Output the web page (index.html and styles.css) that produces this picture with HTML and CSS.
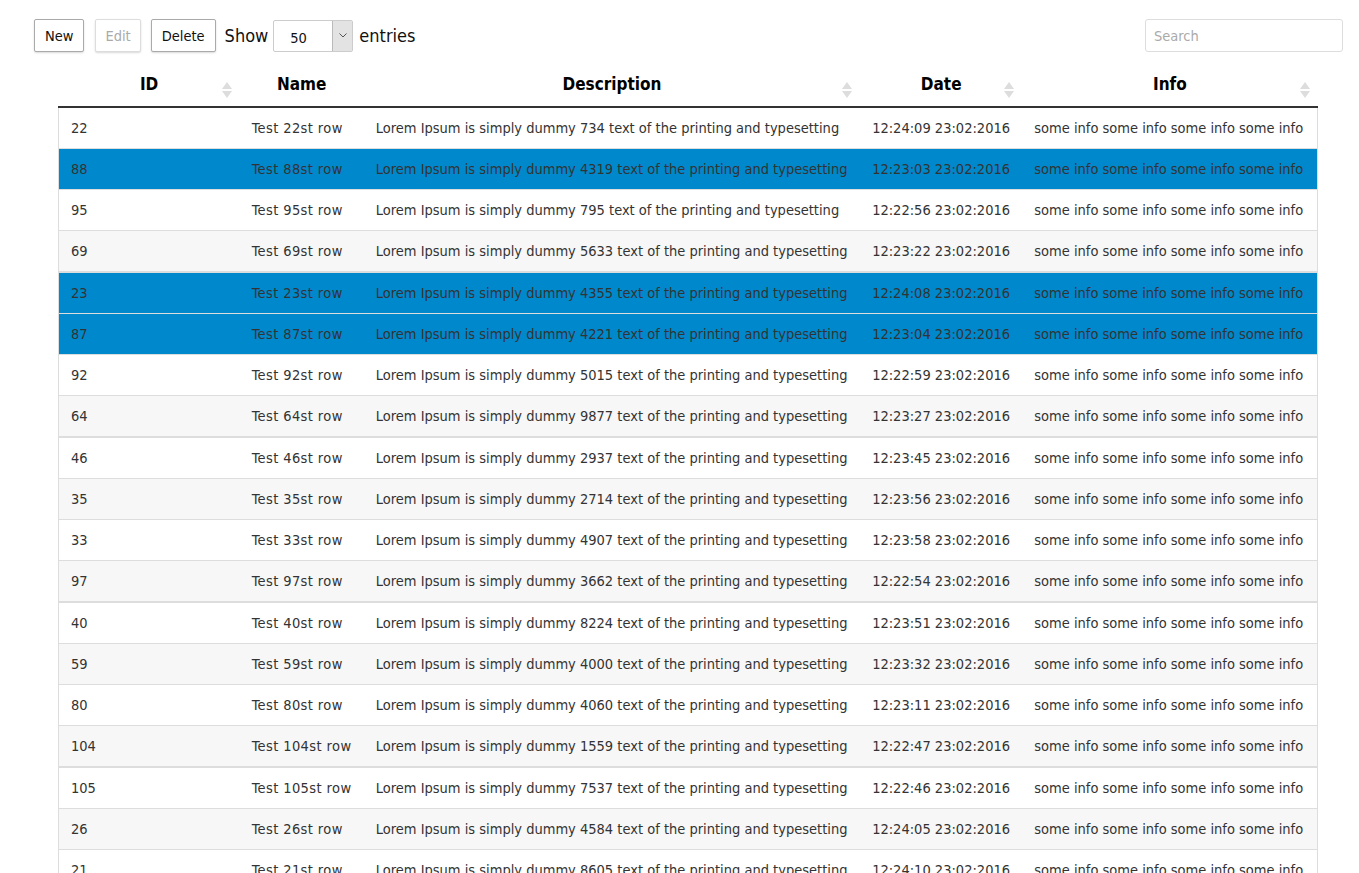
FILE: index.html
```html
<!DOCTYPE html>
<html lang="en">
<head>
    <meta charset="UTF-8">
    <title>Grid</title>
    <link rel="stylesheet" href="styles.css">
</head>
<body>
    <div class="toolbar">
        <div class="tools">
            <button type="button" class="btn btn-new">New</button>
            <button type="button" class="btn" disabled>Edit</button>
            <button type="button" class="btn btn-delete">Delete</button>
            <span class="label">Show</span>
            <div class="select">
                <span class="value">50</span>
                <span class="arrow"><svg width="8" height="5" viewBox="0 0 8 5"><path d="M0.5 0.5 L4 4 L7.5 0.5" fill="none" stroke="#555" stroke-width="1"/></svg></span>
            </div>
            <span class="label">entries</span>
        </div>
        <input type="text" class="search" placeholder="Search">
    </div>

    <table class="grid">
        <colgroup>
            <col style="width:181px"><col style="width:124px"><col style="width:496px"><col style="width:162px"><col style="width:295px">
        </colgroup>
        <thead>
            <tr>
                <th>ID<span class="sort"></span></th>
                <th>Name</th>
                <th>Description<span class="sort"></span></th>
                <th>Date<span class="sort"></span></th>
                <th>Info<span class="sort"></span></th>
            </tr>
        </thead>
        <tbody>
            <tr><td>22</td><td>Test 22st row</td><td>Lorem Ipsum is simply dummy 734 text of the printing and typesetting</td><td>12:24:09 23:02:2016</td><td>some info some info some info some info</td></tr>
            <tr class="selected"><td>88</td><td>Test 88st row</td><td>Lorem Ipsum is simply dummy 4319 text of the printing and typesetting</td><td>12:23:03 23:02:2016</td><td>some info some info some info some info</td></tr>
            <tr><td>95</td><td>Test 95st row</td><td>Lorem Ipsum is simply dummy 795 text of the printing and typesetting</td><td>12:22:56 23:02:2016</td><td>some info some info some info some info</td></tr>
            <tr><td>69</td><td>Test 69st row</td><td>Lorem Ipsum is simply dummy 5633 text of the printing and typesetting</td><td>12:23:22 23:02:2016</td><td>some info some info some info some info</td></tr>
            <tr class="selected"><td>23</td><td>Test 23st row</td><td>Lorem Ipsum is simply dummy 4355 text of the printing and typesetting</td><td>12:24:08 23:02:2016</td><td>some info some info some info some info</td></tr>
            <tr class="selected"><td>87</td><td>Test 87st row</td><td>Lorem Ipsum is simply dummy 4221 text of the printing and typesetting</td><td>12:23:04 23:02:2016</td><td>some info some info some info some info</td></tr>
            <tr><td>92</td><td>Test 92st row</td><td>Lorem Ipsum is simply dummy 5015 text of the printing and typesetting</td><td>12:22:59 23:02:2016</td><td>some info some info some info some info</td></tr>
            <tr><td>64</td><td>Test 64st row</td><td>Lorem Ipsum is simply dummy 9877 text of the printing and typesetting</td><td>12:23:27 23:02:2016</td><td>some info some info some info some info</td></tr>
            <tr><td>46</td><td>Test 46st row</td><td>Lorem Ipsum is simply dummy 2937 text of the printing and typesetting</td><td>12:23:45 23:02:2016</td><td>some info some info some info some info</td></tr>
            <tr><td>35</td><td>Test 35st row</td><td>Lorem Ipsum is simply dummy 2714 text of the printing and typesetting</td><td>12:23:56 23:02:2016</td><td>some info some info some info some info</td></tr>
            <tr><td>33</td><td>Test 33st row</td><td>Lorem Ipsum is simply dummy 4907 text of the printing and typesetting</td><td>12:23:58 23:02:2016</td><td>some info some info some info some info</td></tr>
            <tr><td>97</td><td>Test 97st row</td><td>Lorem Ipsum is simply dummy 3662 text of the printing and typesetting</td><td>12:22:54 23:02:2016</td><td>some info some info some info some info</td></tr>
            <tr><td>40</td><td>Test 40st row</td><td>Lorem Ipsum is simply dummy 8224 text of the printing and typesetting</td><td>12:23:51 23:02:2016</td><td>some info some info some info some info</td></tr>
            <tr><td>59</td><td>Test 59st row</td><td>Lorem Ipsum is simply dummy 4000 text of the printing and typesetting</td><td>12:23:32 23:02:2016</td><td>some info some info some info some info</td></tr>
            <tr><td>80</td><td>Test 80st row</td><td>Lorem Ipsum is simply dummy 4060 text of the printing and typesetting</td><td>12:23:11 23:02:2016</td><td>some info some info some info some info</td></tr>
            <tr><td>104</td><td>Test 104st row</td><td>Lorem Ipsum is simply dummy 1559 text of the printing and typesetting</td><td>12:22:47 23:02:2016</td><td>some info some info some info some info</td></tr>
            <tr><td>105</td><td>Test 105st row</td><td>Lorem Ipsum is simply dummy 7537 text of the printing and typesetting</td><td>12:22:46 23:02:2016</td><td>some info some info some info some info</td></tr>
            <tr><td>26</td><td>Test 26st row</td><td>Lorem Ipsum is simply dummy 4584 text of the printing and typesetting</td><td>12:24:05 23:02:2016</td><td>some info some info some info some info</td></tr>
            <tr><td>21</td><td>Test 21st row</td><td>Lorem Ipsum is simply dummy 8605 text of the printing and typesetting</td><td>12:24:10 23:02:2016</td><td>some info some info some info some info</td></tr>
        </tbody>
    </table>
</body>
</html>
```

FILE: styles.css
```css
body {
    margin: 0;
    padding: 19px 16px 0 34px;
    font-family: "DejaVu Sans Condensed", "DejaVu Sans", sans-serif;
    font-size: 14.5px;
    color: #333;
    background-color: #fff;
}

.toolbar {
    display: flex;
    justify-content: space-between;
    align-items: center;
    height: 33px;
}

.tools {
    display: flex;
    align-items: center;
    gap: 10px;
}

.btn {
    height: 33px;
    padding: 0 9px;
    font-family: inherit;
    font-size: 14.5px;
    color: #111;
    background-color: #fff;
    border: 1px solid #aaa;
    border-radius: 2px;
    box-shadow: 0 1px 2px rgba(0, 0, 0, 0.15);
    cursor: pointer;
}

.btn-new {
    margin-right: 1px;
    padding: 0 10px;
}

.btn-delete {
    padding: 0 10px;
}

.btn:disabled {
    color: #aaa;
    border-color: #ddd;
    cursor: default;
}

.label {
    font-size: 18px;
    color: #111;
    margin-left: -1px;
}

.select {
    display: flex;
    width: 78px;
    height: 30px;
    border: 1px solid #ccc;
    border-radius: 2px;
    margin: 0 -3px 0 -5px;
}

.select .value {
    flex: 1;
    display: flex;
    align-items: center;
    padding-top: 4px;
    padding-left: 16px;
    font-size: 14.5px;
    color: #111;
}

.select .arrow {
    width: 19px;
    display: flex;
    align-items: center;
    justify-content: center;
    background-color: #e3e3e3;
    border-left: 1px solid #bbb;
}

.search {
    width: 198px;
    height: 33px;
    box-sizing: border-box;
    padding: 0 8px;
    font-family: inherit;
    font-size: 14.5px;
    border: 1px solid #ddd;
    border-radius: 3px;
}

.search::placeholder {
    color: #aaa;
}

.grid {
    margin: 10px 0 0 24px;
    width: 1260px;
    border-collapse: collapse;
    table-layout: fixed;
}

.grid th {
    position: relative;
    height: 44px;
    font-size: 17px;
    font-weight: bold;
    color: #000;
    text-align: center;
    border-bottom: 2px solid #333;
    padding: 0;
}

.sort {
    position: absolute;
    right: 8px;
    top: 20px;
    width: 0;
    height: 0;
    border-left: 5px solid transparent;
    border-right: 5px solid transparent;
    border-bottom: 7px solid #ddd;
}

.sort::after {
    content: "";
    position: absolute;
    left: -5px;
    top: 9px;
    border-left: 5px solid transparent;
    border-right: 5px solid transparent;
    border-top: 7px solid #ddd;
}

.grid tbody tr {
    height: 41px;
}

.grid tbody tr:nth-child(4n) {
    height: 42px;
}

.grid tbody tr:nth-child(even) {
    background-color: #f7f7f7;
}

.grid tbody tr.selected {
    background-color: #0088cc;
}

.grid td {
    padding: 1px 12px 0;
    white-space: nowrap;
    overflow: hidden;
    border-bottom: 1px solid #ddd;
}

.grid tbody tr:nth-child(4n) td {
    border-bottom-width: 2px;
}

.grid td:nth-child(2) {
    letter-spacing: 0.4px;
}

.grid td:first-child {
    border-left: 1px solid #ddd;
}

.grid td:last-child {
    border-right: 1px solid #ddd;
}
```
